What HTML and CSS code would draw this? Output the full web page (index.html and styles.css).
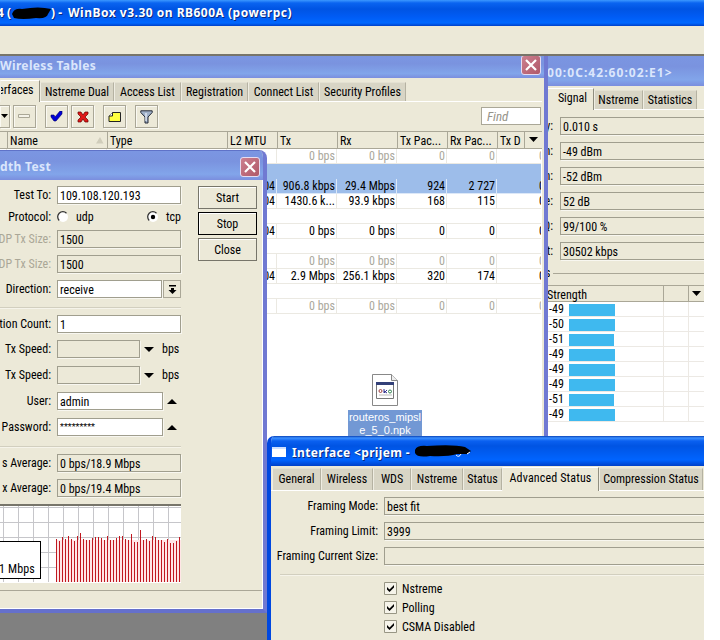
FILE: index.html
```html
<!DOCTYPE html>
<html lang="en">
<head>
<meta charset="utf-8">
<title>WinBox v3.30 on RB600A (powerpc)</title>
<link rel="stylesheet" href="styles.css">
</head>
<body>
<div class="desktop">
  <header class="app-title"><span class="four">4 (</span><svg class="redact" width="40" height="14"><path d="M0 8Q2 2 10 3Q27 0 39 3L36 8Q35 13 24 12Q10 14 2 12Z"/></svg><span class="rest">) - </span><span class="name">WinBox v3.30 on RB600A (powerpc)</span></header>
  <div class="menu-strip"></div>

  <section class="window signal">
    <div class="titlebar">00:0C:42:60:02:E1&gt;</div>
    <nav class="tabs"><b class="t-sig active">Signal</b><b class="t-nst">Nstreme</b><b class="t-sta">Statistics</b></nav>
    <div class="readings">
      <label>y:</label><p>0.010 s</p>
      <label>n:</label><p>-49 dBm</p>
      <label>n:</label><p>-52 dBm</p>
      <label>e:</label><p>52 dB</p>
      <label>Q:</label><p>99/100 %</p>
      <label>t:</label><p>30502 kbps</p>
    </div>
    <div class="legend"><span>s</span><i></i></div>
    <div class="srow shead"><span>Strength</span><span></span><span><svg width="10" height="6"><path d="M0 0H9L4.5 5Z"/></svg></span></div>
    <div class="srow"><span>-49<i></i></span><span></span></div>
    <div class="srow"><span>-50<i></i></span><span></span></div>
    <div class="srow"><span>-51<i class="low"></i></span><span></span></div>
    <div class="srow"><span>-49<i></i></span><span></span></div>
    <div class="srow"><span>-49<i></i></span><span></span></div>
    <div class="srow"><span>-49<i></i></span><span></span></div>
    <div class="srow"><span>-51<i class="low"></i></span><span></span></div>
    <div class="srow"><span>-49<i></i></span><span></span></div>
  </section>

  <section class="window tables">
    <div class="titlebar"><span>Wireless Tables</span><button class="close"><svg width="12" height="12"><path d="M1 1L11 11M11 1L1 11"/></svg></button></div>
    <nav class="tabs"><b class="t-int active">erfaces</b><b class="t-dual">Nstreme Dual</b><b class="t-acc">Access List</b><b class="t-reg">Registration</b><b class="t-con">Connect List</b><b class="t-sec">Security Profiles</b></nav>
    <div class="toolbar">
      <div class="tool first"><svg width="8" height="5"><path d="M0 0H7L3.5 4Z"/></svg></div>
      <div class="tool minus"><svg width="13" height="5"><path d="M.5.5H11.5V3.5H.5Z" fill="#f4f2e8" stroke="#aaa796"/></svg></div>
      <div class="tool check"><svg width="13" height="11"><path d="M1 4L4 4L5 6L10 0H12V3L6 10H4L1 6Z" fill="#0000d8" stroke="#000060" stroke-width=".6"/></svg></div>
      <div class="tool cross"><svg width="12" height="12"><path d="M1 1H4L6 4L8 1H11V3L8 6L11 9V11H8L6 8L4 11H1V9L4 6L1 3Z" fill="#e01818" stroke="#600" stroke-width=".7"/></svg></div>
      <div class="tool note"><svg width="14" height="12"><path d="M4.5 1.5H12.5V10.5H1V5Z" fill="#ffff40" stroke="#222"/><path d="M1 5H4.5V1.5" fill="#fff" stroke="#222"/></svg></div>
      <div class="tool filter"><svg width="13" height="14"><path d="M.8.8H12.2V2.5L8 7V13H5V7L.8 2.5Z" fill="#9fb0c8" stroke="#252b38"/><path d="M6 3V11" stroke="#e8eef8" stroke-width="1.3"/></svg></div>
      <div class="find">Find</div>
    </div>
    <div class="row head"><span></span><span>Name<svg width="8" height="7"><path d="M0 6.5H7.5L4 0Z" fill="#d0cdbb"/></svg></span><span>Type</span><span>L2 MTU</span><span>Tx</span><span>Rx</span><span>Tx Pac...</span><span>Rx Pac...</span><span>Tx D</span><span><svg width="10" height="6"><path d="M0 0H9L4.5 5Z"/></svg></span></div>
    <div class="row off"><span></span><span></span><span></span><span></span><span>0 bps</span><span>0 bps</span><span>0</span><span>0</span><span class="cut">0</span></div>
    <div class="row sel"></div>
    <div class="row sel"><span></span><span></span><span></span><span>04</span><span>906.8 kbps</span><span>29.4 Mbps</span><span>924</span><span>2 727</span><span class="cut">0</span></div>
    <div class="row"><span></span><span></span><span></span><span>04</span><span>1430.6 k...</span><span>93.9 kbps</span><span>168</span><span>115</span><span class="cut">0</span></div>
    <div class="row"></div>
    <div class="row"><span></span><span></span><span></span><span>04</span><span>0 bps</span><span>0 bps</span><span>0</span><span>0</span><span class="cut">0</span></div>
    <div class="row"></div>
    <div class="row off"><span></span><span></span><span></span><span></span><span>0 bps</span><span>0 bps</span><span>0</span><span>0</span><span class="cut">0</span></div>
    <div class="row"><span></span><span></span><span></span><span>04</span><span>2.9 Mbps</span><span>256.1 kbps</span><span>320</span><span>174</span><span class="cut">0</span></div>
    <div class="row"></div>
    <div class="row off"><span></span><span></span><span></span><span></span><span>0 bps</span><span>0 bps</span><span>0</span><span>0</span><span class="cut">0</span></div>
  </section>

  <figure class="file">
    <svg width="26" height="32"><path d="M.5.5H19.5L25.5 6.5V31.5H.5Z" fill="#fff" stroke="#888"/><path d="M19.5.5V6.5H25.5" fill="#eee" stroke="#888"/><path d="M4.5 9.5H21.5V24.5H4.5Z" fill="#fff" stroke="#777"/><path d="M4 9.500H22" stroke="#334078" stroke-width="3"/><circle cx="8.500" cy="17" r="1.500" fill="none" stroke="#a04040"/><path d="M12 15V19L15 16M12 17L15 19" fill="none" stroke="#303090"/><circle cx="18" cy="17.500" r="1.500" fill="none" stroke="#308050"/><path d="M7 21H20" stroke="#bbb"/></svg>
    <figcaption>routeros_mipsl<br>e_5_0.npk</figcaption>
  </figure>

  <section class="window bandwidth">
    <div class="titlebar"><span>dth Test</span><button class="close"><svg width="12" height="12"><path d="M1 1L11 11M11 1L1 11"/></svg></button></div>
    <div class="bw-body">
      <div class="form">
        <label>Test To:</label><p class="in">109.108.120.193</p>
        <label>Protocol:</label><div class="radios"><svg width="12" height="12"><circle cx="6" cy="6" r="5" fill="#fff"/><path d="M2.200 9.500A5 5 0 0 1 9.500 2.200" fill="none" stroke="#333" stroke-width="1.300"/></svg><span>udp</span><svg class="on" width="12" height="12"><circle cx="6" cy="6" r="5" fill="#fff"/><path d="M2.200 9.500A5 5 0 0 1 9.500 2.200" fill="none" stroke="#333" stroke-width="1.300"/><circle cx="6" cy="6" r="2.200"/></svg><span>tcp</span></div>
        <label class="dim">DP Tx Size:</label><p>1500</p>
        <label class="dim">DP Tx Size:</label><p>1500</p>
        <label>Direction:</label><div class="pair"><p class="in dir">receive</p><div class="drop"><svg width="9" height="9"><path d="M1 0H8V1.500H1ZM3 3H6V5H8.500L4.500 9L.5 5H3Z"/></svg></div></div>
        <hr>
        <label>tion Count:</label><p class="in">1</p>
        <label>Tx Speed:</label><div class="pair"><p class="speed"></p><svg width="10" height="6"><path d="M0 0H10L5 5Z"/></svg><span>bps</span></div>
        <label>Tx Speed:</label><div class="pair"><p class="speed"></p><svg width="10" height="6"><path d="M0 0H10L5 5Z"/></svg><span>bps</span></div>
        <label>User:</label><div class="pair"><p class="in cred">admin</p><svg width="10" height="6"><path d="M0 5H10L5 0Z"/></svg></div>
        <label>Password:</label><div class="pair"><p class="in cred stars">*********</p><svg width="10" height="6"><path d="M0 5H10L5 0Z"/></svg></div>
        <hr>
        <label>s Average:</label><p>0 bps/18.9 Mbps</p>
        <label>x Average:</label><p>0 bps/19.4 Mbps</p>
      </div>
      <div class="buttons"><button>Start</button><button class="default">Stop</button><button>Close</button></div>
      <div class="chart">
        <svg width="181" height="76" viewBox="0 2 181 76" shape-rendering="crispEdges">
          <path d="M0 3.500H181M0 18.500H181M0 33.500H181M0 48.500H181M0 63.500H181M3.500 2V78M18.500 2V78M33.500 2V78M48.500 2V78M63.500 2V78M78.500 2V78M93.500 2V78M108.500 2V78M123.500 2V78M138.500 2V78M153.500 2V78M168.500 2V78" stroke="#c6c6ca"/>
          <path d="M56 36H181V78H56Z" fill="#ffe6e6"/>
          <path d="M56.500 78V35M59.500 78V37M62.500 78V33M65.500 78V35M68.500 78V32M71.500 78V35M74.500 78V37M77.500 78V32M80.500 78V29M83.500 78V35M86.500 78V36M89.500 78V36M92.500 78V34M95.500 78V33M98.500 78V33M101.500 78V34M104.500 78V36M107.500 78V32M110.500 78V36M113.500 78V36M116.500 78V34M119.500 78V32M122.500 78V32M125.500 78V35M128.500 78V36M131.500 78V30M134.500 78V38M137.500 78V38M140.500 78V26M143.500 78V36M146.500 78V35M149.500 78V37M152.500 78V32M155.500 78V33M158.500 78V36M161.500 78V36M164.500 78V38M167.500 78V35M170.500 78V39M173.500 78V39M176.500 78V37M179.500 78V33" stroke="#c01820"/>
        </svg>
        <div class="value">1 Mbps</div>
      </div>
      <div class="statusbar"></div>
    </div>
  </section>

  <section class="window iface">
    <div class="titlebar"><i class="icon"></i><span>Interface &lt;prijem - </span><svg class="redact" width="60" height="16"><path d="M2 6Q4 1 14 2Q40 0 52 3L58 7L54 10L44 10Q34 13 17 12Q4 14 2 9Z"/><path d="M43 11Q46 14 48 10M54 10L57 8" fill="none" stroke="#fff"/></svg></div>
    <nav class="tabs"><b class="t-gen">General</b><b class="t-wir">Wireless</b><b class="t-wds">WDS</b><b class="t-ns2">Nstreme</b><b class="t-st">Status</b><b class="t-adv active">Advanced Status</b><b class="t-cmp">Compression Status</b></nav>
    <div class="readings">
      <label>Framing Mode:</label><p>best fit</p>
      <label>Framing Limit:</label><p>3999</p>
      <label>Framing Current Size:</label><p></p>
    </div>
    <hr>
    <ul class="checks">
      <li><svg width="13" height="13"><path d="M.5.5H12.500V12.500H.5Z" fill="#f6f4ea" stroke="#989684"/><path d="M3 5L5.500 7.500L10 3V5.500L5.500 10L3 7.500Z"/></svg>Nstreme</li>
      <li><svg width="13" height="13"><path d="M.5.5H12.500V12.500H.5Z" fill="#f6f4ea" stroke="#989684"/><path d="M3 5L5.500 7.500L10 3V5.500L5.500 10L3 7.500Z"/></svg>Polling</li>
      <li><svg width="13" height="13"><path d="M.5.5H12.500V12.500H.5Z" fill="#f6f4ea" stroke="#989684"/><path d="M3 5L5.500 7.500L10 3V5.500L5.500 10L3 7.500Z"/></svg>CSMA Disabled</li>
    </ul>
  </section>
</div>
</body>
</html>
```
FILE: styles.css
```css
* { box-sizing: border-box; margin: 0; padding: 0; }
body { width: 720px; height: 640px; background: #fff; overflow: hidden; }
.desktop {
  position: relative; width: 704px; height: 640px; overflow: hidden; background: #808080;
  font: 12px/14px "Roboto Condensed", Roboto, "Liberation Sans", sans-serif;
  font-stretch: condensed; color: #000; white-space: nowrap;
}
svg { display: block; flex: none; }
.app-title {
  height: 26px; display: flex; align-items: center; color: #fff;
  font: bold 12px/26px "Noto Sans", sans-serif; text-shadow: 1px 1px #0a2a80;
  background: linear-gradient(#3c98ff 0, #0a64f0 3px, #0054e3 9px, #005cf5 17px, #0068ff 23px, #0040c8 26px);
}
.app-title .four { width: 12px; text-indent: -3px; }
.app-title .rest { width: 17px; white-space: pre; }
.app-title .redact { width: 39px; position: relative; }
.app-title .name { letter-spacing: .5px; }
.menu-strip { height: 30px; background: #ece9d8; border-bottom: 2px solid #77756a; }
.window { position: absolute; overflow: hidden; background: #ece9d8; }
.titlebar {
  display: flex; align-items: center; color: #dbe6fc; font: bold 12px/20px "Noto Sans", sans-serif; letter-spacing: .35px;
  background: linear-gradient(#7b96e2, #7a93df 35%, #82a5ea 80%, #7b8ede);
}
.close {
  width: 20px; height: 20px; border: 1px solid #e6dcf0; border-radius: 3px; margin-left: auto;
  background: linear-gradient(135deg, #cc8090, #b05868); display: grid; place-items: center;
}
.close path { stroke: #fff; stroke-width: 2.2; }
.tabs { display: flex; align-items: flex-end; border-bottom: 1px solid #fff; }
.tabs b {
  font-weight: normal; height: 19px; line-height: 19px; text-align: center; background: #d8d5c5;
  border-right: 1px solid #b5b2a2; border-left: 1px solid #efede2; border-top: 1px solid #e4e1d2; overflow: hidden;
}
.tabs b.active { height: 22px; line-height: 18px; background: #ece9d8; border-top-color: #fff; border-right-color: #908e80; margin-bottom: -1px; }
label { text-align: right; }
p { height: 18px; line-height: 18px; border: 1px solid #a09e8e; box-shadow: 1px 1px #f8f7f0; padding-left: 2px; }
p.in { background: #fff; }
hr { border: 0; height: 2px; border-top: 1px solid #d2cfbf; border-bottom: 1px solid #f6f4ea; }

.signal { left: 547px; top: 56px; width: 160px; height: 384px; background: #fff; }
.signal .titlebar { height: 30px; padding-top: 4px; letter-spacing: 1.05px; }
.signal .tabs { height: 24px; background: #ece9d8; }
.t-sig { width: 47px; padding-left: 4px; } .t-nst { width: 49px; } .t-sta { width: 54px; }
.signal .readings { display: grid; grid-template-columns: 6px 1fr; gap: 7px; align-content: start; padding-top: 7px; height: 157px; background: #ece9d8; }
.signal label { line-height: 19px; overflow: hidden; height: 18px; display: flex; justify-content: flex-end; }
.legend { height: 18px; display: flex; background: #ece9d8; gap: 3px; }
.legend span { width: 3px; text-indent: -2px; overflow: hidden; margin-top: -1px; }
.legend i { flex: 1; height: 1px; background: #aaa797; margin-top: 6px; }
.srow { display: grid; grid-template-columns: 117px 25px 1fr; height: 15px; border-bottom: 1px solid #ece9e4; line-height: 15px; }
.srow span { display: flex; border-right: 1px solid #ece9e4; padding-left: 2px; }
.srow i { background: #3fb9ef; width: 46px; height: 12px; margin: 2px 48px 0 auto; }
.srow i.low { width: 45px; margin-right: 49px; }
.srow.shead { height: 17px; background: #ece9d8; border-top: 1px solid #aaa797; border-bottom: 1px solid #aaa797; line-height: 18px; }
.shead span { border-color: #aaa797; padding-left: 0; }
.shead svg { margin: 5px 0 0 3px; }

.tables { left: 0; top: 56px; width: 548px; height: 390px; background: #fff; border-right: 4px solid #7079d2; }
.tables::after { content: ""; position: absolute; right: 0; top: 22px; width: 2px; height: 400px; background: #ece9d8; }
.tables .titlebar { height: 22px; padding-right: 3px; line-height: 18px; }
.tables .titlebar span { margin-top: -2px; }
.tables .close { margin-top: -4px; }
.tables .tabs { height: 24px; background: #ece9d8; }
.t-int { width: 40px; } .t-int.active { text-align: left; text-indent: -3px; }
.t-dual { width: 74px; } .t-acc { width: 67px; } .t-reg { width: 67px; } .t-con { width: 71px; } .t-sec { width: 87px; }
.toolbar { height: 29px; display: flex; background: #ece9d8; padding-top: 3px; }
.tool { width: 23px; height: 23px; border: 1px solid #aaa797; box-shadow: 1px 1px #faf9f2, inset 1px 1px #faf9f2; display: grid; place-items: center; margin-right: 3px; }
.tool.first { width: 10px; border-left: 0; }
.tool.minus, .tool.cross, .tool.note { margin-right: 9px; }
.find { width: 60px; height: 18px; margin: 2px 3px 0 auto; background: #fff; border: 1px solid #aaa797; color: #96948a; font-style: italic; padding-left: 5px; line-height: 17px; font-size: 13px; }
.row { display: grid; grid-template-columns: 7px 100px 120px 50px 60px 60px 50px 50px 44px; height: 15px; width: 541px; border-bottom: 1px solid #ebe9e2; }
.row span { border-right: 1px solid #ebe9e2; text-align: right; padding-right: 1px; overflow: hidden; }
.row .cut { border: 0; padding: 0 0 0 42px; text-align: left; }
.row.off { color: #aaa89c; }
.row.sel { background: #9dbdea; border-color: #dce8f8; }
.row.sel:has(+ .sel) { border-color: #9dbdea; }
.row.sel span { border-color: #dce8f8; }
.row.head { width: 544px; height: 18px; grid-template-columns: 8px 100px 120px 50px 60px 60px 50px 50px 27px 18px; background: #ece9d8; border-top: 1px solid #aaa797; border-bottom: 1px solid #aaa797; line-height: 18px; }
.row.head span { text-align: left; padding: 0 0 0 2px; border-color: #aaa797; display: flex; }
.head span svg { margin: 5px 3px 0 auto; }

.file { position: absolute; left: 348px; top: 374px; width: 74px; color: #fff; font: 11px/13px "Liberation Sans", sans-serif; text-align: center; }
.file svg { margin: 0 auto 4px; }
.file figcaption { background: #7298d4; height: 30px; padding-top: 1px; }

.bandwidth { left: 0; top: 150px; width: 267px; height: 463px; border-right: 4px solid #7079d2; border-bottom: 4px solid #6570cc; border-top-right-radius: 8px; }
.bandwidth .titlebar { height: 30px; padding: 3px 4px 0 0; margin-right: -1px; border-top: 1px solid #5f72c8; }
.bw-body { height: 429px; border-right: 1px solid #fff; border-bottom: 1px solid #fff; display: grid; grid-template-columns: 181px 17px 59px; grid-template-rows: 324px 80px 1fr; }
.form { display: grid; grid-template-columns: 51px 124px; column-gap: 6px; align-content: start; padding-top: 6px;
  grid-template-rows: 22px 22px 25px 25px 27px 8px 25px 26px 26px 26px 28px 8px 25px 25px; }
.form label { line-height: 19px; overflow: hidden; display: flex; justify-content: flex-end; }
.form .dim { color: #aaa797; }
.form hr { grid-column: 1 / 3; }
.radios { display: flex; height: 18px; line-height: 19px; }
.radios svg { margin: 3px 7px 0 0; }
.radios .on { margin-left: auto; }
.pair { display: flex; height: 18px; line-height: 19px; }
.pair p { flex: none; }
.pair .dir { width: 105px; margin-right: 1px; }
.drop { width: 18px; border: 1px solid #aaa797; display: grid; place-items: center; }
.pair .speed { width: 83px; } .pair .cred { width: 106px; }
.pair > svg { margin: 7px 8px 0 4px; }
.stars { font-size: 9px; line-height: 17px; }
.buttons { grid-column: 3; padding-top: 6px; display: grid; gap: 3px; align-content: start; }
.buttons button { height: 23px; background: #ece9d8; border: 1px solid #77756a; box-shadow: inset 1px 1px #fff; font: inherit; }
.buttons .default { border-color: #000; }
.chart { grid-row: 2; grid-column: 1; background: #fff; border-top: 2px solid #77756a; position: relative; height: 79px; overflow: hidden; }
.value { position: absolute; left: -2px; bottom: 4px; width: 43px; height: 38px; border: 1px solid #000; background: #fff; text-align: right; padding: 20px 5px 0 0; letter-spacing: .15px; }
.statusbar { grid-row: 3; grid-column: 1 / 4; margin-top: 6px; border-top: 1px solid #aaa797; width: 262px; }

.iface { left: 267px; top: 436px; width: 440px; height: 210px; border-left: 4px solid #0048e0; border-top-left-radius: 7px; }
.iface .titlebar { height: 30px; color: #fff; padding: 4px 0 0 1px; text-shadow: 1px 1px #0a2a80; margin-left: -1px; background: linear-gradient(#0842b8 0, #3c90ff 2px, #0a60f0 5px, #0054e3 10px, #0064ff 24px, #0040c8); }
.icon { width: 14px; height: 10px; background: #fff; margin: 0 6px 3px 1px; border-top: 2px solid #cfe0ff; }
.iface .titlebar span { width: 121px; white-space: pre; }
.iface .titlebar .redact { margin-top: -2px; }
.iface .tabs { height: 25px; padding-left: 1px; }
.t-gen { width: 49px; } .t-wir { width: 52px; } .t-wds { width: 38px; } .t-ns2 { width: 52px; } .t-st { width: 39px; } .t-adv { width: 97px; letter-spacing: .15px; } .t-cmp { width: 104px; }
.iface .tabs b { height: 22px; line-height: 20px; flex: none; }
.iface .tabs b.active { height: 24px; line-height: 21px; }
.iface .readings { display: grid; grid-template-columns: 107px 1fr; gap: 7px 6px; align-content: start; padding-top: 6px; line-height: 19px; height: 83px; }
.iface .readings label { height: 18px; }
.iface hr { margin-left: 9px; }
.checks { list-style: none; padding: 6px 0 0 113px; display: grid; gap: 6px; }
.checks li { display: flex; gap: 5px; height: 13px; line-height: 14px; }
```
